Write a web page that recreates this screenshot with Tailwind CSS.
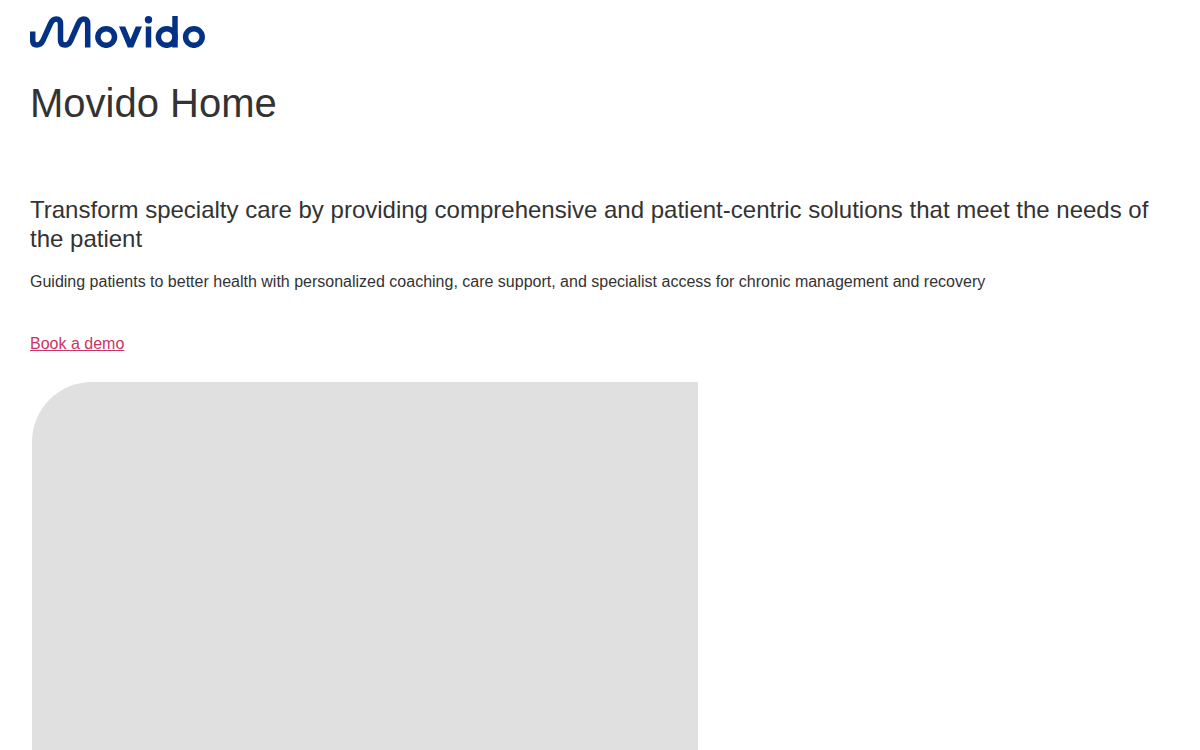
<!DOCTYPE html>
<html lang="en">
<head>
<meta charset="utf-8">
<meta name="viewport" content="width=device-width, initial-scale=1">
<title>Movido Home</title>
<script src="https://cdn.jsdelivr.net/npm/@tailwindcss/browser@4"></script>
</head>
<body class="overflow-x-hidden bg-white font-['Liberation_Sans',Arial,sans-serif] text-base leading-6 text-[#333333]">
<header class="px-[30px] pt-4">
  <a href="#" aria-label="Movido" class="block w-[175px]">
    <svg class="block h-8 w-[175px]" viewBox="30 16 175 32" fill="none" stroke="#033284" stroke-width="5.5">
      <path d="M32.7 31.5V40.3C32.7 43.3 34.2 45 36.8 45C39.6 45 41.3 43.8 42.8 40.8L50.4 23.8C51.9 20.6 53.6 19 56.2 19C59.2 19 60.5 20.8 60.5 24V40C60.5 43.3 62.1 45 64.9 45C67.6 45 69.3 43.8 70.7 40.8L78.1 23.8C79.6 20.6 81.3 19 83.6 19C86.4 19 87.7 20.8 87.7 24V47.5"/>
      <circle cx="106.2" cy="37" r="8.3"/>
      <path d="M119 26.5H125.2L130.5 39.3L135.8 26.5H142L133.2 47.5H127.8Z" fill="#033284" stroke="none"/>
      <path d="M148.5 26.5V47.5"/>
      <circle cx="148.5" cy="19.7" r="3.7" fill="#033284" stroke="none"/>
      <circle cx="166.7" cy="37" r="8.3"/>
      <path d="M175 16V47.5"/>
      <circle cx="193.9" cy="37" r="8.3"/>
    </svg>
  </a>
</header>
<main class="px-[30px]">
  <h1 class="mt-[31px] text-[40px] leading-[48px]">Movido Home</h1>
  <h2 class="mt-[68px] text-2xl leading-[29px]">Transform specialty care by providing comprehensive and patient-centric solutions that meet the needs of the patient</h2>
  <p class="mt-[17px]">Guiding patients to better health with personalized coaching, care support, and specialist access for chronic management and recovery</p>
  <p class="mt-[38px]"><a href="#" class="text-[#cc3366] underline">Book a demo</a></p>
  <div class="mt-[26px] ml-0.5 h-[480px] w-full max-w-[666px] rounded-tl-[60px] bg-[#e0e0e0]"></div>
</main>
</body>
</html>
